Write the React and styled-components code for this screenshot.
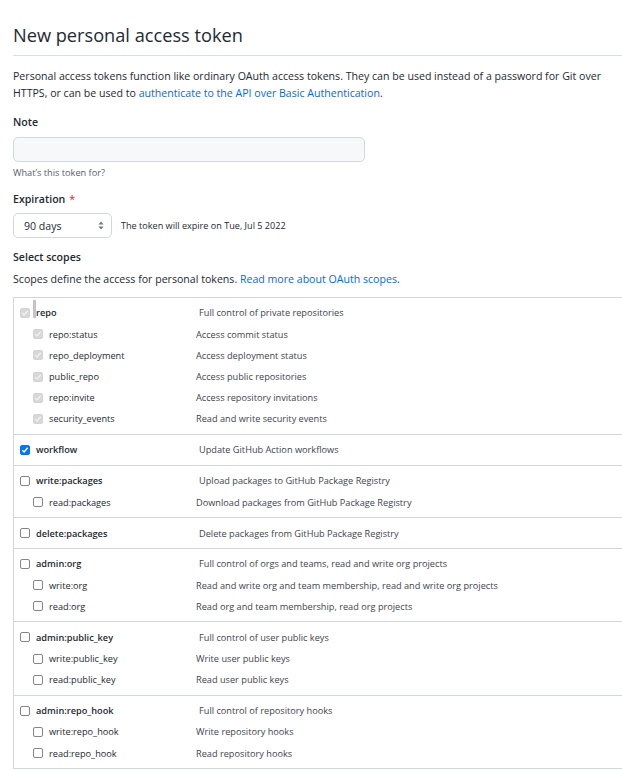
import React from 'react'
import styled, { createGlobalStyle } from 'styled-components'

const Global = createGlobalStyle`
  body {
    margin: 0;
    background: #fff;
    overflow: hidden;
    font-family: "Open Sans", "Noto Sans", sans-serif;
    color: #24292f;
  }
`

const Page = styled.div`
  padding: 22px 0 0 13px;
`

const Title = styled.h2`
  margin: 0;
  font-size: 18.2px;
  line-height: 26px;
  font-weight: 400;
  padding-bottom: 7px;
  border-bottom: 1px solid #d8dee4;
`

const Lead = styled.p`
  margin: 12px 0 0;
  font-size: 10.6px;
  line-height: 17px;
`

const Link = styled.a`
  color: #0969da;
  text-decoration: none;
`

const Field = styled.div`
  margin-top: ${p => p.$top || 12}px;
`

const Label = styled.div`
  font-size: 10.6px;
  line-height: 17px;
  font-weight: 600;
`

const Req = styled.span`
  color: #cf222e;
  margin-left: 4px;
  font-weight: 400;
`

const Input = styled.div`
  margin-top: 6px;
  width: 350px;
  height: 23px;
  background: #f6f8fa;
  border: 1px solid #d0d7de;
  border-radius: 5px;
`

const Hint = styled.div`
  margin-top: 4px;
  font-size: 9.2px;
  line-height: 13px;
  color: #57606a;
`

const SelectRow = styled.div`
  margin-top: 5px;
  display: flex;
  align-items: center;
  gap: 9px;
`

const Select = styled.div`
  height: 23px;
  border: 1px solid #d0d7de;
  border-radius: 5px;
  display: flex;
  align-items: center;
  justify-content: space-between;
  padding: 0 7px 0 10px;
  box-sizing: content-box;
  width: 80px;
  font-size: 10.6px;
`

const Note = styled.span`
  font-size: 9.1px;
  color: #24292f;
`

const Sub = styled.p`
  margin: 5px 0 0;
  font-size: 10.6px;
  line-height: 17px;
`

const Table = styled.div`
  margin-top: 9px;
  border-left: 1px solid #d0d7de;
  border-top: 1px solid #d0d7de;
`

const Group = styled.div`
  padding: 4.4px 0;
  border-bottom: 1px solid #d0d7de;
`

const Row = styled.div`
  height: 21.2px;
  display: flex;
  align-items: center;
  padding-left: ${p => (p.$child ? 19 : 6)}px;
  font-size: 9.2px;
`

const Name = styled.span`
  width: ${p => (p.$child ? 163 : 179)}px;
  display: flex;
  align-items: center;
  gap: 6px;
  font-weight: ${p => (p.$child ? 400 : 600)};
  color: #24292f;
  position: relative;
`

const Desc = styled.span`
  color: #3d444d;
`

const Box = styled.span`
  width: 10px;
  height: 10px;
  box-sizing: border-box;
  border-radius: 2px;
  flex: none;
  display: flex;
  align-items: center;
  justify-content: center;
  border: 1px solid ${p => (p.$on ? '#0075ff' : p.$dis ? '#d3d3d3' : '#858585')};
  background: ${p => (p.$on ? '#0075ff' : p.$dis ? '#d8d8d8' : '#fff')};
`

const Bar = styled.span`
  position: absolute;
  left: 13px;
  top: -6px;
  width: 3px;
  height: 18px;
  background: #c4c4c4;
`

function Check({ on, dis }) {
  return (
    <Box $on={on} $dis={dis}>
      {(on || dis) && (
        <svg width="8" height="8" viewBox="0 0 8 8">
          <path d="M1.3 4.2 L3.1 6 L6.7 1.8" fill="none" stroke={dis ? '#f0f0f0' : '#fff'} strokeWidth="1.4" />
        </svg>
      )}
    </Box>
  )
}

const scopes = [
  { name: 'repo', desc: 'Full control of private repositories', dis: true, bar: true, kids: [
    ['repo:status', 'Access commit status'],
    ['repo_deployment', 'Access deployment status'],
    ['public_repo', 'Access public repositories'],
    ['repo:invite', 'Access repository invitations'],
    ['security_events', 'Read and write security events'],
  ] },
  { name: 'workflow', desc: 'Update GitHub Action workflows', on: true, kids: [] },
  { name: 'write:packages', desc: 'Upload packages to GitHub Package Registry', kids: [
    ['read:packages', 'Download packages from GitHub Package Registry'],
  ] },
  { name: 'delete:packages', desc: 'Delete packages from GitHub Package Registry', kids: [] },
  { name: 'admin:org', desc: 'Full control of orgs and teams, read and write org projects', kids: [
    ['write:org', 'Read and write org and team membership, read and write org projects'],
    ['read:org', 'Read org and team membership, read org projects'],
  ] },
  { name: 'admin:public_key', desc: 'Full control of user public keys', kids: [
    ['write:public_key', 'Write user public keys'],
    ['read:public_key', 'Read user public keys'],
  ] },
  { name: 'admin:repo_hook', desc: 'Full control of repository hooks', kids: [
    ['write:repo_hook', 'Write repository hooks'],
    ['read:repo_hook', 'Read repository hooks'],
  ] },
]

export default function App() {
  return (
    <Page>
      <Global />
      <Title>New personal access token</Title>
      <Lead>
        Personal access tokens function like ordinary OAuth access tokens. They can be used instead of a password for Git over<br />
        HTTPS, or can be used to <Link>authenticate to the API over Basic Authentication</Link>.
      </Lead>

      <Field>
        <Label>Note</Label>
        <Input />
        <Hint>What’s this token for?</Hint>
      </Field>

      <Field>
        <Label>Expiration<Req>*</Req></Label>
        <SelectRow>
          <Select>
            <span>90 days</span>
            <svg width="6" height="9" viewBox="0 0 6 9">
              <path d="M3 0.5 L5.5 3.5 H0.5 Z M3 8.5 L5.5 5.5 H0.5 Z" fill="#6e7781" />
            </svg>
          </Select>
          <Note>The token will expire on Tue, Jul 5 2022</Note>
        </SelectRow>
      </Field>

      <Field $top={11}>
        <Label>Select scopes</Label>
        <Sub>
          Scopes define the access for personal tokens. <Link>Read more about OAuth scopes</Link>.
        </Sub>
      </Field>

      <Table>
        {scopes.map(s => (
          <Group key={s.name}>
            <Row>
              <Name>
                <Check on={s.on} dis={s.dis} />
                {s.bar && <Bar />}
                {s.name}
              </Name>
              <Desc>{s.desc}</Desc>
            </Row>
            {s.kids.map(([n, d]) => (
              <Row $child key={n}>
                <Name $child>
                  <Check dis={s.dis} />
                  {n}
                </Name>
                <Desc>{d}</Desc>
              </Row>
            ))}
          </Group>
        ))}
      </Table>
    </Page>
  )
}
